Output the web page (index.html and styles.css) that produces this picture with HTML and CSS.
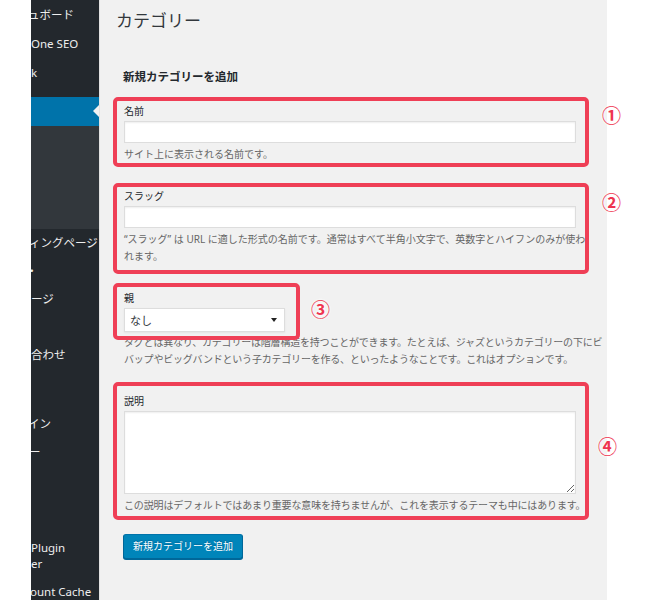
FILE: index.html
```html
<!DOCTYPE html>
<html lang="ja">
<head>
<meta charset="utf-8">
<title>カテゴリー</title>
<link rel="stylesheet" href="styles.css">
</head>
<body>
<div class="page">
  <div class="edge"></div>
  <nav class="sidebar">
    <ul class="menu">
      <li class="mi"><span class="cut-3">ュボード</span></li>
      <li class="mi">One SEO</li>
      <li class="mi">k</li>
      <li class="sep"></li>
      <li class="mi active"></li>
      <li class="sub"></li>
      <li class="mi low"><span class="cut-2">ィングページ</span></li>
      <li class="mi low"><span class="cut-4">・</span></li>
      <li class="mi low">ージ</li>
      <li class="mi low"></li>
      <li class="mi low">合わせ</li>
      <li class="mi low"></li>
      <li class="sep sep-13"></li>
      <li class="mi low"><span class="cut-3">イン</span></li>
      <li class="mi low"><span class="cut-2">ー</span></li>
      <li class="mi low"></li>
      <li class="mi low"></li>
      <li class="sep sep-12"></li>
      <li class="mi two">Plugin<br>er</li>
      <li class="mi low"><span class="cut-1">ount Cache</span></li>
    </ul>
  </nav>
  <main class="content">
    <h1 class="title">カテゴリー</h1>
    <h2 class="subtitle">新規カテゴリーを追加</h2>
    <form class="form">
      <div class="field">
        <label class="label" for="tag-name">名前</label>
        <input class="input" id="tag-name" type="text">
        <p class="help">サイト上に表示される名前です。</p>
        <span class="note note-1"><span class="num num-1">①</span></span>
      </div>
      <div class="field">
        <label class="label" for="tag-slug">スラッグ</label>
        <input class="input" id="tag-slug" type="text">
        <p class="help">“スラッグ” は URL に適した形式の名前です。通常はすべて半角小文字で、英数字とハイフンのみが使わ<br>れます。</p>
        <span class="note note-2"><span class="num num-2">②</span></span>
      </div>
      <div class="field">
        <div class="pick">
          <span class="label">親</span>
          <div class="select"><span>なし</span><span class="arrow"></span></div>
          <span class="note note-3"><span class="num num-3">③</span></span>
        </div>
        <p class="help help-tight">タグとは異なり、カテゴリーは階層構造を持つことができます。たとえば、ジャズというカテゴリーの下にビ<br>バップやビッグバンドという子カテゴリーを作る、といったようなことです。これはオプションです。</p>
      </div>
      <div class="field">
        <label class="label" for="tag-description">説明</label>
        <textarea class="area" id="tag-description"></textarea>
        <p class="help help-desc">この説明はデフォルトではあまり重要な意味を持ちませんが、これを表示するテーマも中にはあります。</p>
        <span class="note note-4"><span class="num num-4">④</span></span>
      </div>
      <div class="actions">
        <button class="btn" type="button">新規カテゴリーを追加</button>
      </div>
    </form>
  </main>
  <div class="rest"></div>
</div>
</body>
</html>
```
FILE: styles.css
```css
* { box-sizing: border-box; }
html, body {
  margin: 0;
  padding: 0;
  height: 600px;
  overflow: hidden;
  background: #fff;
}
body {
  font-family: "Noto Sans", "Noto Sans CJK JP", sans-serif;
  color: #23282d;
}
.page {
  display: flex;
  height: 600px;
}
.edge {
  width: 31px;
  flex: none;
  background: #fff;
}
.rest {
  flex: 1;
  background: #fff;
}

/* sidebar */
.sidebar {
  width: 68px;
  flex: none;
  background: #23282d;
  overflow: hidden;
}
.menu {
  list-style: none;
  margin: 0;
  padding: 0;
}
.mi {
  height: 29px;
  display: flex;
  align-items: center;
  color: #eee;
  font-size: 11.5px;
  line-height: 16px;
  white-space: nowrap;
}
.mi.low { height: 28px; }
.mi.two { height: 44px; }
.sep { height: 10px; }
.sep-13 { height: 13px; }
.sep-12 { height: 12px; }
.active {
  position: relative;
  background: #0073aa;
}
.active::after {
  content: "";
  position: absolute;
  right: 0;
  top: 8px;
  border: 6px solid transparent;
  border-right-color: #f1f1f1;
  border-left-width: 0;
}
.sub {
  height: 103px;
  background: #32373c;
}
.cut-1 { margin-left: -1px; }
.cut-2 { margin-left: -2px; }
.cut-3 { margin-left: -3px; }
.cut-4 { margin-left: -5px; }

/* content */
.content {
  width: 508px;
  flex: none;
  background: #f1f1f1;
  border-left: 1px solid #e2e2e2;
  padding: 10px 0 0 16px;
}
.title {
  margin: 0;
  font-size: 17px;
  line-height: 22px;
  font-weight: 400;
  color: #32373c;
}
.subtitle {
  margin: 37px 0 0 7px;
  font-size: 11.5px;
  line-height: 16px;
  font-weight: 700;
  color: #23282d;
}
.form {
  width: 476px;
  margin: 19px 0 0 8px;
}
.field {
  position: relative;
}
.field + .field { margin-top: 26px; }
.label {
  display: block;
  font-size: 10px;
  line-height: 14px;
  color: #23282d;
}
.input {
  display: block;
  width: 452px;
  height: 22px;
  margin: 3px 0 0;
  padding: 0 4px;
  border: 1px solid #ddd;
  background: #fff;
  box-shadow: inset 0 1px 2px rgba(0, 0, 0, 0.07);
  font: inherit;
  outline: none;
}
.area {
  display: block;
  width: 452px;
  height: 83px;
  margin: 3px 0 0;
  padding: 2px 4px;
  border: 1px solid #ddd;
  background: #fff;
  box-shadow: inset 0 1px 2px rgba(0, 0, 0, 0.07);
  font: inherit;
  resize: vertical;
  outline: none;
}
.help {
  margin: 3px 0 0;
  font-size: 10px;
  line-height: 17px;
  color: #666;
  white-space: nowrap;
}
.help-tight {
  margin-top: 2px;
  letter-spacing: -0.2px;
}
.help-desc {
  letter-spacing: -0.15px;
}
.pick {
  position: relative;
  width: fit-content;
}
.select {
  display: flex;
  align-items: center;
  justify-content: space-between;
  width: 161px;
  height: 24px;
  margin-top: 3px;
  padding: 0 7px 0 5px;
  border: 1px solid #ddd;
  background: #fff;
  box-shadow: 0 1px 2px rgba(0, 0, 0, 0.06);
  font-size: 11px;
  color: #32373c;
}
.arrow {
  width: 0;
  height: 0;
  border-left: 3px solid transparent;
  border-right: 3px solid transparent;
  border-top: 4px solid #222;
}
.actions {
  margin-top: 19px;
}
.btn {
  display: inline-block;
  height: 25px;
  margin: 0 0 0 -1px;
  padding: 0 9px;
  font-family: "Noto Sans", "Noto Sans CJK JP", sans-serif;
  font-size: 10px;
  line-height: 23px;
  color: #fff;
  background: #0085ba;
  border: 1px solid #0073aa;
  border-color: #0073aa #006799 #006799;
  border-radius: 3px;
  box-shadow: 0 1px 0 #006799;
  text-shadow: 0 -1px 1px #006799;
  cursor: pointer;
}

/* annotations */
.note {
  position: absolute;
  border: 4px solid #ef3f56;
  border-radius: 5px;
  pointer-events: none;
}
.note-1 { top: -7px; bottom: -4px; left: -11px; right: 11px; }
.note-2 { top: -6px; bottom: -9px; left: -11px; right: 11px; }
.note-3 { top: -8px; bottom: -8px; left: -11px; right: -15px; }
.note-4 { top: -12px; bottom: -6px; left: -11px; right: 11px; }
.num {
  position: absolute;
  font-family: "Noto Sans CJK JP", sans-serif;
  font-size: 19px;
  line-height: 19px;
  font-weight: 700;
  color: #ee3550;
  text-shadow: 0 0 3px #fff, 0 0 3px #fff, 0 0 2px #fff;
}
.num-1 { left: calc(100% + 17px); top: 4px; }
.num-2 { left: calc(100% + 17px); top: 5px; }
.num-3 { left: calc(100% + 15px); top: 12px; }
.num-4 { left: calc(100% + 13px); top: 50px; }
```
